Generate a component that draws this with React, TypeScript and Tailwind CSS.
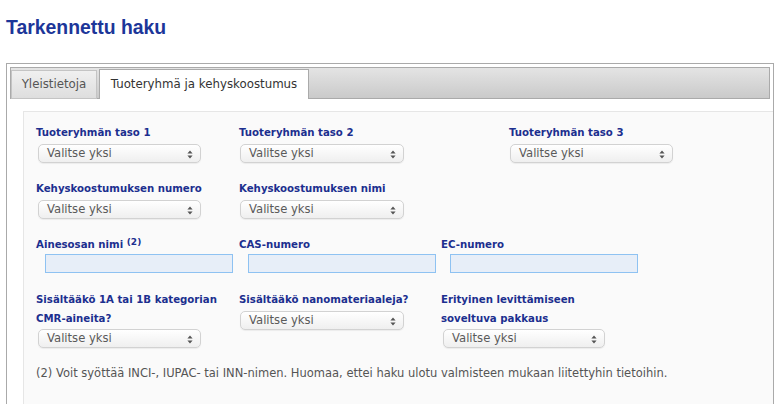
import React from "react";

// select box with the little up/down arrows
function Select({ width = "w-[163px]", className = "" }: { width?: string; className?: string }) {
    return (
        <div className={"relative flex h-[19px] items-center rounded-[5px] border border-[#d2d2d2] bg-linear-to-b from-white to-[#efefef] pl-[8px] text-[11.6px] leading-none text-[#5a5a5a] shadow-[0_1px_1px_rgba(0,0,0,0.06)] " + width + " " + className}>
            Valitse yksi
            <svg className="absolute right-[7px] top-[5px]" width="6" height="9" viewBox="0 0 6 9">
                <path d="M3 0.5L5.6 3.6H0.4Z M3 8.5L0.4 5.4H5.6Z" fill="#555" />
            </svg>
        </div>
    );
}

function TextInput() {
    return <div className="ml-[9px] h-[19px] w-[188px] border border-[#8ec2f2] bg-[#e7eef8]" />;
}

function Label({ children }: { children: React.ReactNode }) {
    return <div className="text-[10.2px] font-bold leading-[19px] text-[#1c2f8f]">{children}</div>;
}

function App() {
    return (
        <div className="h-[404px] w-[774px] overflow-hidden bg-white font-['DejaVu_Sans',Verdana,sans-serif]">
            <h1 className="pl-[6px] pt-[15px] font-['Liberation_Sans',Arial,sans-serif] text-[19.4px] font-bold leading-[24px] text-[#1c3699]">
                Tarkennettu haku
            </h1>

            <div className="ml-[6px] mt-[24px] h-[400px] w-[768px] overflow-hidden border border-[#aaaaaa] p-[3px]">
                {/* tabs */}
                <div className="flex h-[32px] items-end border border-[#aaaaaa] bg-linear-to-b from-[#e4e4e4] to-[#cacaca]">
                    <div className="mb-[-1px] flex h-[29px] w-[86px] items-center justify-center border border-[#c4c4c4] bg-linear-to-b from-[#f0f0f0] to-[#dedede] text-[11.8px] text-[#555]">
                        Yleistietoja
                    </div>
                    <div className="mb-[-1px] ml-[2px] flex h-[30px] w-[210px] items-center justify-center border border-b-0 border-[#aaaaaa] bg-white text-[11.8px] text-[#333]">
                        Tuoteryhmä ja kehyskoostumus
                    </div>
                </div>

                <div className="mt-[12px] ml-[13px] w-[800px] border border-[#e6e6e6] bg-[#fafafa] pl-[12px] pt-[11px]">
                    <div className="flex">
                        <div className="w-[203px]">
                            <Label>Tuoteryhmän taso 1</Label>
                            <Select className="ml-[2px] mt-[2px]" />
                        </div>
                        <div className="w-[270px]">
                            <Label>Tuoteryhmän taso 2</Label>
                            <Select className="ml-[1px] mt-[2px]" width="w-[164px]" />
                        </div>
                        <div>
                            <Label>Tuoteryhmän taso 3</Label>
                            <Select className="ml-[1px] mt-[2px]" />
                        </div>
                    </div>

                    <div className="mt-[16px] flex">
                        <div className="w-[203px]">
                            <Label>Kehyskoostumuksen numero</Label>
                            <Select className="ml-[2px] mt-[2px]" />
                        </div>
                        <div>
                            <Label>Kehyskoostumuksen nimi</Label>
                            <Select className="ml-[1px] mt-[2px]" width="w-[164px]" />
                        </div>
                    </div>

                    <div className="mt-[16px] flex">
                        <div className="w-[203px]">
                            <Label>
                                Ainesosan nimi <sup className="relative top-[-3px] text-[9px]">(2)</sup>
                            </Label>
                            <TextInput />
                        </div>
                        <div className="w-[202px]">
                            <Label>CAS-numero</Label>
                            <TextInput />
                        </div>
                        <div>
                            <Label>EC-numero</Label>
                            <TextInput />
                        </div>
                    </div>

                    <div className="mt-[17px] flex">
                        <div className="w-[203px]">
                            <Label>
                                Sisältääkö 1A tai 1B kategorian
                                <br />
                                CMR-aineita?
                            </Label>
                            <Select className="ml-[2px] mt-[1px]" />
                        </div>
                        <div className="w-[202px]">
                            <Label>Sisältääkö nanomateriaaleja?</Label>
                            <Select className="ml-[1px] mt-[2px]" width="w-[164px]" />
                        </div>
                        <div>
                            <Label>
                                Erityinen levittämiseen
                                <br />
                                soveltuva pakkaus
                            </Label>
                            <Select className="ml-[2px] mt-[1px]" width="w-[162px]" />
                        </div>
                    </div>

                    <p className="mt-[16px] pb-[40px] text-[11.5px] leading-[19px] text-[#555]">
                        (2) Voit syöttää INCI-, IUPAC- tai INN-nimen. Huomaa, ettei haku ulotu valmisteen mukaan liitettyhin tietoihin.
                    </p>
                </div>
            </div>
        </div>
    );
}

export default App;
